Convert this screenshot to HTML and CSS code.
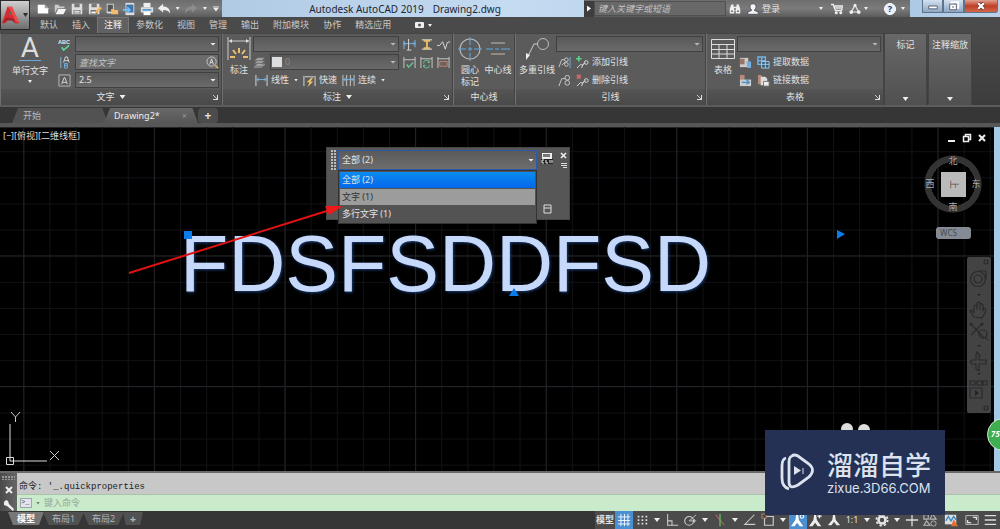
FILE: index.html
```html
<!DOCTYPE html>
<html lang="zh-CN">
<head>
<meta charset="utf-8">
<title>Autodesk AutoCAD 2019 Drawing2.dwg</title>
<link rel="stylesheet" href="styles.css">
</head>
<body>
<svg class="sprite" aria-hidden="true">
  <symbol id="new" viewBox="0 0 16 16"><path d="M2 3h8l4 4v6H2z" fill="#fff"/><path d="M10 3v4h4" fill="#999"/></symbol>
  <symbol id="open" viewBox="0 0 16 16"><path d="M2 13V3h4l2 2h5v2H5l-3 6z" fill="#ccc"/><path d="M3 14l3-6h9l-3 6z" fill="#f4f4f4"/></symbol>
  <symbol id="save" viewBox="0 0 16 16"><path d="M2 2h12v12H2z" fill="#ddd"/><path d="M5 2h6v4H5zM4 9h8v5H4z" fill="#777"/><path d="M5 10h6v1H5zM5 12h6v1H5z" fill="#fff"/></symbol>
  <symbol id="saveas" viewBox="0 0 16 16"><path d="M1 2h12v12H1z" fill="#ddd"/><path d="M4 2h6v4H4zM3 9h8v5H3z" fill="#777"/><path d="M4 11h5v2H4z" fill="#fff"/><path d="M8 13l1-3 5-5 2 2-5 5z" fill="#f2b25c"/></symbol>
  <symbol id="cloudopen" viewBox="0 0 16 16"><path d="M2 2h8v11H2z" fill="#ddd"/><path d="M3 3h6v8H3z" fill="#555"/><path d="M7 8h3l1 1h4v5H7z" fill="#f2bb70"/></symbol>
  <symbol id="mobile" viewBox="0 0 16 16"><path d="M4 1h10v14H4z" fill="#ddd"/><path d="M5 3h8v9H5z" fill="#3b76ad"/><path d="M1 9h8M6 6l3 3-3 3" stroke="#76bdf2" stroke-width="2" fill="none"/></symbol>
  <symbol id="print" viewBox="0 0 16 16"><path d="M4 1h8v5H4z" fill="#eee"/><path d="M1 6h14v6H1z" fill="#ddd"/><path d="M3 8h10v2H3z" fill="#579bd0"/><path d="M4 11h8v4H4z" fill="#fff"/></symbol>
  <symbol id="undo" viewBox="0 0 16 16"><path d="M1 7l6-5v3c5 0 8 3 8 8-2-3-4-4-8-4v3z" fill="#eee"/></symbol>
  <symbol id="redo" viewBox="0 0 16 16"><path d="M15 7L9 2v3C4 5 1 8 1 13c2-3 4-4 8-4v3z" fill="#8c8c8c"/></symbol>
  <symbol id="find" viewBox="0 0 16 16"><path d="M3 2h3v3h4V2h3l2 6v6H9v-4H7v4H1V8z" fill="#eee"/><path d="M3 10h2v2H3zM11 10h2v2h-2zM7 7h2v2H7z" fill="#444a5e"/></symbol>
  <symbol id="user" viewBox="0 0 16 16"><path d="M8 1c3 0 4 2 4 4 0 2-1 3-2 4v1l5 2v3H1v-3l5-2V9C5 8 4 7 4 5c0-2 1-4 4-4z" fill="#f4f4f4" stroke="#3d4254"/></symbol>
  <symbol id="cart" viewBox="0 0 16 16"><path d="M0 2h3l3 8h8l1-6H5" fill="none" stroke="#eee" stroke-width="2"/><path d="M5 5h9v3H6z" fill="#ccc"/><circle cx="7" cy="13" r="2" fill="#eee"/><circle cx="13" cy="13" r="2" fill="#eee"/></symbol>
  <symbol id="apps" viewBox="0 0 16 16"><path d="M8 3l5 9H3z" fill="none" stroke="#eee" stroke-width="1.5"/><circle cx="8" cy="3" r="2" fill="#eee"/><circle cx="3" cy="12" r="2.5" fill="#eee"/><circle cx="13" cy="12" r="2.5" fill="#eee"/></symbol>
  <symbol id="align" viewBox="0 0 14 14"><path d="M3 1v12" stroke="#7db7df"/><path d="M6 7l2-6h2l2 6M7 5h4" fill="none" stroke="#ddd"/><path d="M7 8h3v5H7zM7 10h3" fill="none" stroke="#75b5e4"/></symbol>
  <symbol id="height" viewBox="0 0 14 14"><path d="M1 1h12v12H1z" fill="none" stroke="#bbb"/><path d="M4 11l2.500-7h1L10 11M5 9h4" fill="none" stroke="#ddd"/></symbol>
  <symbol id="dim" viewBox="0 0 24 24"><path d="M1 0v23M23 0v23M2 4h20" stroke="#ccc" fill="none"/><path d="M2 4l3-2v4zM22 4l-3-2v4z" fill="#ddd"/><path d="M12 11v5M6 13l3 4M18 13l-3 4M3 20h5M21 20h-5" stroke="#edbd70" stroke-width="2"/></symbol>
  <symbol id="layers" viewBox="0 0 14 14"><path d="M5 2h8l-4 3H1zM5 5h8l-4 3H1zM5 8h8l-4 3H1z" fill="#a8a8a8" stroke="#646464" stroke-width=".6"/><path d="M1 12h8l4-3" fill="none" stroke="#aaa"/></symbol>
  <symbol id="linear" viewBox="0 0 14 14"><path d="M1 1v12M13 1v12" stroke="#ddd"/><path d="M2 6h10M4 4L2 6l2 2M10 4l2 2-2 2" fill="none" stroke="#75b9ec"/></symbol>
  <symbol id="quick" viewBox="0 0 14 14"><path d="M1 2v11M13 2v11M2 3h10" stroke="#ddd" fill="none"/><path d="M9 4L4 9h3l-2 5 6-6H8l3-4z" fill="#f3c365"/></symbol>
  <symbol id="continue" viewBox="0 0 14 14"><path d="M1 1v12M5 1v12M9 1v12M13 1v12" stroke="#ccc"/><path d="M1 6h12M4 4L2 6l2 2M10 4l2 2-2 2" fill="none" stroke="#75b9ec"/></symbol>
  <symbol id="break" viewBox="0 0 14 14"><path d="M1 3v9M13 2v8" stroke="#77b8ec"/><path d="M1 6h12M2 4L1 6l2 2M11 4l2 2-2 2" fill="none" stroke="#77b8ec"/><path d="M6 1v12M4 13h5" stroke="#ddd"/></symbol>
  <symbol id="space" viewBox="0 0 14 14"><path d="M2 2h11M2 12h11" stroke="#eee"/><path d="M4 3h7M4 11h7M7.500 3v8" stroke="#e9bd70" stroke-width="2"/></symbol>
  <symbol id="jog" viewBox="0 0 14 14"><path d="M0 8h3l3-4 3 8 2-7 3-1" fill="none" stroke="#ddd"/></symbol>
  <symbol id="check" viewBox="0 0 14 14"><path d="M1 1v12M13 1v12M1 4h12" fill="none" stroke="#ccc"/><path d="M4 9l2 3 5-5" fill="none" stroke="#61cb91" stroke-width="1.5"/></symbol>
  <symbol id="update" viewBox="0 0 14 14"><path d="M1 1v12M13 1v12M1 3h12" fill="none" stroke="#ccc"/><path d="M10 7a3 3 0 0 0-6 1M4 10a3 3 0 0 0 6 0M10 5v2H8M4 12v-2h2" fill="none" stroke="#61cb91"/></symbol>
  <symbol id="toler" viewBox="0 0 14 14"><path d="M1 1v12M13 1v12M1 3h12" fill="none" stroke="#ccc"/><path d="M3 6h8v5H3zM5 8.500h1M8 8.500h1" fill="none" stroke="#cc8975"/></symbol>
  <symbol id="centermark" viewBox="0 0 24 24"><circle cx="12" cy="12" r="10" fill="none" stroke="#b8b8b8" stroke-width="1.2"/><path d="M0 12h8M10 12h4M16 12h8M12 0v8M12 10v4M12 16v8" stroke="#63a9df"/></symbol>
  <symbol id="centerline" viewBox="0 0 24 24"><path d="M5 6h14M5 17h14" stroke="#c3b9ac"/><path d="M0 12h7M9 12h4M15 12h9" stroke="#63a9df"/></symbol>
  <symbol id="mleader" viewBox="0 0 24 24"><circle cx="18" cy="7" r="5.500" fill="none" stroke="#bbb"/><path d="M12.500 7H9L3 19" fill="none" stroke="#ccc"/><path d="M1 23v-7l4 2z" fill="#eee"/></symbol>
  <symbol id="lalign" viewBox="0 0 14 14"><path d="M1 12l3-8h3M4 10l3-3h1" fill="none" stroke="#ccc"/><circle cx="9" cy="4" r="2" fill="none" stroke="#ccc"/><circle cx="9" cy="9" r="2" fill="none" stroke="#ccc"/><path d="M13 1v12" stroke="#70afe0"/></symbol>
  <symbol id="lcollect" viewBox="0 0 14 14"><path d="M1 13l3-8h4" fill="none" stroke="#ccc"/><circle cx="10" cy="4" r="2.500" fill="none" stroke="#ccc"/><circle cx="10" cy="9.500" r="2.500" fill="none" stroke="#ccc"/></symbol>
  <symbol id="ladd" viewBox="0 0 14 14"><path d="M3 0v6M0 3h6" stroke="#5ed287" stroke-width="1.800"/><path d="M1 13l4-4 2 1 3-3M6 13l2-5" fill="none" stroke="#ddd"/><circle cx="11" cy="7" r="2" fill="none" stroke="#ddd"/></symbol>
  <symbol id="ldel" viewBox="0 0 14 14"><path d="M1 1l4 4M5 1L1 5" stroke="#df6767" stroke-width="1.800"/><path d="M1 13l4-4 2 1 3-3M6 13l2-5" fill="none" stroke="#ddd"/><circle cx="11" cy="7" r="2" fill="none" stroke="#ddd"/></symbol>
  <symbol id="table" viewBox="0 0 24 22"><path d="M.5 1.500h23v19H.5zM.5 6.500h23M.5 11.500h23M.5 16h23M8 6.500v14M16 6.500v14" fill="none" stroke="#ddd"/></symbol>
  <symbol id="dlink" viewBox="0 0 14 14"><path d="M1 2h9v10H1z" fill="#ccc"/><path d="M1 3h5v6H1z" fill="#987566"/><path d="M8 6h5v7H9z" fill="#75aede"/></symbol>
  <symbol id="dextract" viewBox="0 0 14 14"><path d="M1 1h8v8H1zM1 5h8M5 1v8" fill="none" stroke="#73b5e8" stroke-width="1.500"/><path d="M5 6h8v7H5zM5 9h8M9 6v7" fill="#345b78" stroke="#a7cce7"/></symbol>
  <symbol id="dupload" viewBox="0 0 14 14"><path d="M1 1h5v6H1z" fill="#b58a78"/><path d="M1 6h12v7H1z" fill="#ccc"/><path d="M3 9h7M8 6l3 3-3 2" fill="none" stroke="#4a91c7" stroke-width="1.500"/></symbol>
  <symbol id="ddown" viewBox="0 0 14 14"><path d="M1 1h4v10H1z" fill="#b58a78"/><path d="M4 3h5l2 2v7H4z" fill="#ddd"/><path d="M7 8h6v5H7z" fill="#eee" stroke="#777"/></symbol>
  <symbol id="grid" viewBox="0 0 16 16"><path d="M4.500 1v14M8.500 1v14M12.500 1v14M1 4.500h14M1 8.500h14M1 12.500h14" stroke="#fff"/></symbol>
  <symbol id="snap" viewBox="0 0 16 16"><path d="M3 4h11M3 8h11M3 12h11" stroke="#ddd" stroke-width="2" stroke-dasharray="2 2.500"/></symbol>
  <symbol id="ortho" viewBox="0 0 16 16"><path d="M3 1v13h12M3 9h5v5" fill="none" stroke="#ccc" stroke-width="1.200"/></symbol>
  <symbol id="polar" viewBox="0 0 16 16"><circle cx="7" cy="9" r="5" fill="none" stroke="#ccc" stroke-width="1.300"/><path d="M7 9h8M7 9l8-7M13 7v4" stroke="#ccc" fill="none"/></symbol>
  <symbol id="iso" viewBox="0 0 16 16"><path d="M3 2l10 12" stroke="#b66" stroke-width="1.200"/><path d="M8 1v14" stroke="#6b6" stroke-width="1.500"/></symbol>
  <symbol id="angle" viewBox="0 0 16 16"><path d="M13 2L2 13h12" fill="none" stroke="#ccc" stroke-width="1.200"/></symbol>
  <symbol id="osnap" viewBox="0 0 16 16"><path d="M4 4h10v10H4z" fill="none" stroke="#ccc" stroke-width="1.300"/><path d="M1 1h5v5H1z" fill="#4c4c4c" stroke="#b78d70"/></symbol>
  <symbol id="scale" viewBox="0 0 16 16"><path d="M7 1h2l1 7 5 6h-4l-3-4-3 4H1l5-6z" fill="#eee"/></symbol>
  <symbol id="scale2" viewBox="0 0 16 16"><path d="M6 1h2l1 7 5 7h-4l-3-4-3 4H0l5-7z" fill="#eee"/><path d="M12 1v5M9.500 3.500h5" stroke="#eee" stroke-width="1.500"/></symbol>
  <symbol id="scale3" viewBox="0 0 16 16"><path d="M6 1h2l1 7 5 7h-4l-3-4-3 4H0l5-7z" fill="#fff"/><circle cx="12.500" cy="4" r="2" fill="none" stroke="#fff" stroke-width="1.200"/></symbol>
  <symbol id="gear" viewBox="0 0 16 16"><circle cx="8" cy="8" r="4" fill="none" stroke="#e5e5e5" stroke-width="3"/><circle cx="8" cy="8" r="6.500" fill="none" stroke="#e5e5e5" stroke-width="2" stroke-dasharray="2.600 2.500"/></symbol>
  <symbol id="plus" viewBox="0 0 16 16"><path d="M8 2v13M1 8h14" stroke="#ddd" stroke-width="1.500"/></symbol>
  <symbol id="shapes" viewBox="0 0 16 16"><path d="M1 2h5v5H1zM11 1l4 6H8zM4 9l4 5H1z" fill="none" stroke="#bbb" stroke-width="1.200"/><circle cx="12" cy="12" r="3" fill="none" stroke="#bbb"/></symbol>
  <symbol id="perf" viewBox="0 0 16 16"><path d="M1 2h13v11H1z" fill="#ddd"/><path d="M2 9l3-5 3 5 3-5 3 4" fill="none" stroke="#368bc8" stroke-width="1.500"/><path d="M11 7l5 8H8z" fill="#e66d32"/></symbol>
  <symbol id="full" viewBox="0 0 16 16"><path d="M1 3h14v10H1z" fill="none" stroke="#ccc"/><path d="M9 5h4v3M3 8v3h4" fill="none" stroke="#ddd" stroke-width="1.500"/></symbol>
  <symbol id="menu" viewBox="0 0 16 16"><path d="M2 3h13M2 8h13M2 13h13" stroke="#ddd" stroke-width="1.600"/></symbol>
</svg>

<header class="top">
  <button class="app" aria-label="应用程序菜单">
    <svg viewBox="0 0 22 20"><path d="M0 19L6 1h5l8 18h-5l-1-5H7l-3 5z" fill="#d62a2f"/><path d="M8 10l1-5 3 5z" fill="#686868"/><path d="M0 19l5-6 8 1 1 5-3-3-6 0z" fill="#9e1f25"/><path d="M6 1h5l8 18-4-2-6-13z" fill="#ef4b4b"/></svg>
    <span class="caret dark"></span>
  </button>
  <div class="bars">
    <div class="titlebar">
      <div class="qat">
        <button aria-label="新建"><svg><use href="#new"/></svg></button>
        <button aria-label="打开"><svg><use href="#open"/></svg></button>
        <button aria-label="保存"><svg><use href="#save"/></svg></button>
        <button aria-label="另存为"><svg><use href="#saveas"/></svg></button>
        <button aria-label="从移动设备打开"><svg><use href="#cloudopen"/></svg></button>
        <button aria-label="保存到移动设备"><svg><use href="#mobile"/></svg></button>
        <button aria-label="打印"><svg><use href="#print"/></svg></button>
        <button aria-label="放弃"><svg><use href="#undo"/></svg></button>
        <span class="caret small"></span>
        <button aria-label="重做"><svg><use href="#redo"/></svg></button>
        <span class="caret small"></span>
        <span class="caret bar"></span>
      </div>
      <div class="title"><span>Autodesk AutoCAD 2019</span><span>Drawing2.dwg</span></div>
      <div class="info">
        <button class="play" aria-label="折叠搜索"><span></span></button>
        <input type="text" aria-label="搜索" placeholder="键入关键字或短语">
        <button aria-label="查找"><svg><use href="#find"/></svg></button>
        <button class="login"><svg><use href="#user"/></svg>登录</button>
        <span class="caret small"></span>
        <button aria-label="购物车"><svg><use href="#cart"/></svg></button>
        <button aria-label="应用"><svg><use href="#apps"/></svg></button>
        <span class="caret small"></span>
        <button class="help" aria-label="帮助"><span>?</span></button>
        <span class="caret small"></span>
      </div>
      <div class="win">
        <button aria-label="最小化"><svg viewBox="0 0 20 12"><path d="M6 6h9v3H6z" fill="#fff" stroke="#555d70"/></svg></button>
        <button aria-label="还原"><svg viewBox="0 0 20 12"><path d="M8 2h7v6H8z" fill="none" stroke="#fff" stroke-width="2"/><path d="M6 4h7v6H6z" fill="#fff" stroke="#555d70"/><path d="M8.500 6.500h2v1h-2z" fill="#555d70"/></svg></button>
        <button class="close" aria-label="关闭"><svg viewBox="0 0 34 12"><path d="M14 3l6 6M20 3l-6 6" stroke="#6c3030" stroke-width="4"/><path d="M14 3l6 6M20 3l-6 6" stroke="#fff" stroke-width="2.400"/></svg></button>
      </div>
    </div>
    <nav class="menu">
      <button>默认</button><button>插入</button><button class="on">注释</button><button>参数化</button><button>视图</button><button>管理</button><button>输出</button><button>附加模块</button><button>协作</button><button>精选应用</button>
      <button class="video" aria-label="显示选项"><svg viewBox="0 0 18 8"><rect x="1" y="1" width="9" height="6" rx="1" fill="#eee"/><circle cx="5.500" cy="4" r="1.500" fill="#555"/><path d="M14 3h4l-2 3z" fill="#eee"/></svg></button>
    </nav>
  </div>
</header>

<main class="ribbon">
  <section class="panel p-text">
    <div class="body">
      <button class="big"><span class="bigA">A</span>单行文字<span class="caret small"></span></button>
      <div class="rows grow">
        <div class="row"><svg viewBox="0 0 14 14"><text x="0" y="6" font-family="Liberation Sans" font-size="6" font-weight="bold" fill="#e4e4e4">ABC</text><path d="M4 10l2 3 6-5" fill="none" stroke="#66d398" stroke-width="1.800"/></svg><span class="combo"><select aria-label="文字样式"><option></option></select></span></div>
        <div class="row"><svg><use href="#align"/></svg><span class="search"><input type="text" aria-label="查找文字" placeholder="查找文字"><svg viewBox="0 0 14 14"><circle cx="6" cy="6" r="5" fill="none" stroke="#ccc"/><path d="M4 9l2-6 2 6M5 7h2" fill="none" stroke="#ddd"/><path d="M10 10l3 3" stroke="#dba66b" stroke-width="2"/></svg></span></div>
        <div class="row"><svg><use href="#height"/></svg><span class="combo"><select aria-label="文字高度"><option>2.5</option></select></span></div>
      </div>
    </div>
    <h2>文字<span class="caret"></span><i class="launch"></i></h2>
  </section>
  <section class="panel p-dim">
    <div class="body">
      <button class="big slim"><svg><use href="#dim"/></svg>标注</button>
      <div class="rows grow">
        <div class="row"><span class="combo dim"><select aria-label="标注样式"><option></option></select></span><svg><use href="#break"/></svg><svg><use href="#space"/></svg><svg><use href="#jog"/></svg></div>
        <div class="row"><svg><use href="#layers"/></svg><span class="combo dim layer"><select aria-label="标注图层"><option>0</option></select></span><svg><use href="#check"/></svg><svg><use href="#update"/></svg><svg><use href="#toler"/></svg></div>
        <div class="row tools"><button><svg><use href="#linear"/></svg>线性</button><span class="caret small"></span><button><svg><use href="#quick"/></svg>快速</button><button><svg><use href="#continue"/></svg>连续</button><span class="caret small"></span></div>
      </div>
    </div>
    <h2>标注<span class="caret"></span><i class="launch"></i></h2>
  </section>
  <section class="panel p-center">
    <div class="body">
      <button class="big slim"><svg><use href="#centermark"/></svg>圆心<br>标记</button>
      <button class="big slim"><svg><use href="#centerline"/></svg>中心线</button>
    </div>
    <h2>中心线</h2>
  </section>
  <section class="panel p-leader">
    <div class="body">
      <button class="big mid"><svg><use href="#mleader"/></svg>多重引线</button>
      <div class="rows grow">
        <div class="row"><span class="combo dim"><select aria-label="引线样式"><option></option></select></span></div>
        <div class="row tools"><svg><use href="#lalign"/></svg><button><svg><use href="#ladd"/></svg>添加引线</button></div>
        <div class="row tools"><svg><use href="#lcollect"/></svg><button><svg><use href="#ldel"/></svg>删除引线</button></div>
      </div>
    </div>
    <h2>引线<i class="launch"></i></h2>
  </section>
  <section class="panel p-table">
    <div class="body">
      <button class="big slim"><svg><use href="#table"/></svg>表格</button>
      <div class="rows grow">
        <div class="row"><span class="combo dim"><select aria-label="表格样式"><option></option></select></span></div>
        <div class="row tools"><svg><use href="#dlink"/></svg><button><svg><use href="#dextract"/></svg>提取数据</button></div>
        <div class="row tools"><svg><use href="#dupload"/></svg><button><svg><use href="#ddown"/></svg>链接数据</button></div>
      </div>
    </div>
    <h2>表格<i class="launch"></i></h2>
  </section>
  <button class="folded">标记<span class="caret"></span></button>
  <button class="folded">注释缩放<span class="caret"></span></button>
</main>

<nav class="docs">
  <button class="doc">开始</button>
  <button class="doc on">Drawing2*<span>×</span></button>
  <button class="add" aria-label="新图形">+</button>
</nav>

<div class="canvas">
  <svg class="layer-svg" aria-hidden="true">
    <defs>
      <pattern id="minor" width="26.120" height="26.120" x="23.300" y="-1.900" patternUnits="userSpaceOnUse"><path d="M.5 0v27M0 .5h27" stroke="#111216"/></pattern>
      <pattern id="major" width="130.600" height="130.600" x="23.300" y="-2.200" patternUnits="userSpaceOnUse"><path d="M.5 0v131M0 .5h131" stroke="#222327"/></pattern>
    </defs>
    <rect width="100%" height="100%" fill="url(#minor)"/><rect width="100%" height="100%" fill="url(#major)"/>
    <path d="M10 297v37h37M6.500 330.500h7v7h-7z" fill="none" stroke="#ddd"/>
    <path d="M11 285l4.500 5 4.500-5M15.500 290v5M50 324l9 9M59 324l-9 9" fill="none" stroke="#ccc"/>
  </svg>
  <div class="viewlabel">[−][俯视][二维线框]</div>
  <div class="mtext">FDSFSDDFSD</div>

  <div class="docwin">
    <button aria-label="最小化"><svg viewBox="0 0 10 10"><path d="M1 8h7" stroke="#eee" stroke-width="2"/></svg></button>
    <button aria-label="还原"><svg viewBox="0 0 10 10"><path d="M3.500 3V1.500h5v5H7M1.500 3.500h5v5h-5z" fill="none" stroke="#eee" stroke-width="1.500"/></svg></button>
    <button aria-label="关闭"><svg viewBox="0 0 10 10"><path d="M2 2l6 6M8 2L2 8" stroke="#eee" stroke-width="2"/></svg></button>
  </div>
  <div class="cube">
    <span class="n">北</span><span class="w">西</span><span class="face">上</span><span class="e">东</span><span class="s">南</span>
  </div>
  <button class="wcs">WCS</button>
  <div class="navbar" aria-hidden="true">
    <svg viewBox="0 0 24 156"><g fill="none" stroke="#292a2d" stroke-width="1.200"><circle cx="19" cy="5" r="2"/><circle cx="11" cy="22" r="7.500"/><circle cx="11" cy="22" r="4"/><path d="M11 14h8v8M7 60l-4-6q2-2 4 2v-7q2-2 3 0v4-7q2-2 3 0v7-6q2-1 3 1v6l1-3q3 0 1 5l-3 5zM4 67l13 14M15 67L4 78"/><circle cx="4" cy="67" r="1"/><circle cx="15" cy="67" r="1"/><circle cx="16" cy="77" r="4"/><path d="M18 80l3 3M10 95l3 4h-1v4h7v4h-7v7l-3-2v-5H5l-2-2 2-2h4v-5zM3 124h5v4H3zM10 124h5v4h-5zM16 124h4v4h-4zM3 131h12v10H3z"/><circle cx="19" cy="151" r="2"/></g><path d="M10 37h4l-2 2zM10 88h4l-2 2zM10 116h4l-2 2zM8 133v6l4-3z" fill="#222326"/></svg>
  </div>

  <section class="quick" aria-label="快捷特性">
    <i class="grip"></i>
    <div class="quickmain">
      <span class="combo"><select aria-label="对象类型"><option>全部 (2)</option><option>文字 (1)</option><option>多行文字 (1)</option></select></span>
      <ul class="list" role="listbox">
        <li role="option" aria-selected="true">全部 (2)</li>
        <li role="option" class="hover">文字 (1)</li>
        <li role="option">多行文字 (1)</li>
      </ul>
    </div>
    <div class="side">
      <button aria-label="自定义"><svg viewBox="0 0 12 12"><path d="M1 1h10v6H1z" fill="#eee"/><path d="M2 2h7v3H2z" fill="#777"/><path d="M0 7h12v5H0z" fill="#222"/><path d="M3 8H1v3h2M5 8v3h2M9 8v3M11 8v3" fill="none" stroke="#eee"/></svg></button>
      <button aria-label="计算器"><svg viewBox="0 0 12 12"><path d="M3 2h7v8H3zM3 5h7" fill="none" stroke="#ddd"/></svg></button>
    </div>
    <div class="side">
      <button aria-label="关闭"><svg viewBox="0 0 12 12"><path d="M4 3l5 5M9 3L4 8" stroke="#eee" stroke-width="1.600"/></svg></button>
      <button class="opt" aria-label="选项"><svg viewBox="0 0 12 12"><path d="M4 1.500h6M4 3.500h6M6 5.500h4" stroke="#ddd"/></svg></button>
    </div>
  </section>

  <svg class="layer-svg over" aria-hidden="true">
    <path d="M184 104h8v8h-8zM837 103l8 4-8 5zM514 161l5 8h-10z" fill="#0a7cec"/>
    <path d="M129 146L330 83" stroke="#e01212" stroke-width="2"/><path d="M343 79l-14 9-4-9z" fill="#f01818"/>
    <circle cx="847" cy="302" r="6" fill="#ddd"/><circle cx="864" cy="303" r="6" fill="#ddd"/>
  </svg>
</div>

<section class="command">
  <div class="handle">
    <i></i>
    <button aria-label="关闭"><svg viewBox="0 0 12 12"><path d="M3 3l6 6M9 3L3 9" stroke="#eee" stroke-width="2"/></svg></button>
    <button aria-label="自定义"><svg viewBox="0 0 12 12"><path d="M1 3l2-2 2 1 1 3 5 5-1 2-6-5-3-1z" fill="#eee"/></svg></button>
  </div>
  <div class="cmdmain">
    <div class="history">命令: '_.quickproperties</div>
    <label class="prompt"><span class="chip">&gt;_</span><span class="caret small grey"></span><input type="text" aria-label="命令" placeholder="键入命令"></label>
  </div>
</section>

<footer class="status">
  <nav class="layouts"><button class="on">模型</button><button>布局1</button><button>布局2</button><button class="more">+</button></nav>
  <div class="tools2">
    <button class="model">模型</button>
    <button class="blue" aria-label="栅格"><svg><use href="#grid"/></svg></button>
    <button aria-label="捕捉"><svg><use href="#snap"/></svg></button><span class="caret"></span>
    <button aria-label="正交"><svg><use href="#ortho"/></svg></button>
    <button aria-label="极轴"><svg><use href="#polar"/></svg></button><span class="caret"></span>
    <button aria-label="等轴测"><svg><use href="#iso"/></svg></button><span class="caret"></span>
    <button aria-label="对象捕捉追踪"><svg><use href="#angle"/></svg></button>
    <button aria-label="对象捕捉"><svg><use href="#osnap"/></svg></button><span class="caret"></span>
    <button class="blue" aria-label="注释可见性"><svg><use href="#scale3"/></svg></button>
    <button aria-label="自动缩放"><svg><use href="#scale2"/></svg></button>
    <button aria-label="注释比例"><svg><use href="#scale"/></svg></button>
    <button>1:1</button><span class="caret"></span>
    <button aria-label="工作空间"><svg><use href="#gear"/></svg></button><span class="caret"></span>
    <button aria-label="注释监视器"><svg><use href="#plus"/></svg></button>
    <button aria-label="隔离对象"><svg><use href="#shapes"/></svg></button>
    <button class="gap" aria-label="图形性能"><svg><use href="#perf"/></svg></button>
    <button class="gap" aria-label="全屏"><svg><use href="#full"/></svg></button>
    <button aria-label="自定义"><svg><use href="#menu"/></svg></button>
  </div>
</footer>

<div class="badge">75</div>
<aside class="brand">
  <svg viewBox="0 0 36 38"><path d="M13 3q2-2 6 0l11 8q7 6 0 13l-11 8q-9 5-9-3V9q0-5 3-6z" fill="none" stroke="#dce2ee" stroke-width="2.800"/><path d="M7 5Q3 6 3 13v12q0 9 7 11" fill="none" stroke="#dce2ee" stroke-width="2.800"/><path d="M15 13v9l7-4.500z" fill="#dce2ee"/><path d="M24 15v6" stroke="#dce2ee"/></svg>
  <p><strong>溜溜自学</strong><span>zixue.3D66.COM</span></p>
</aside>
</body>
</html>
```

FILE: styles.css
```css
* { box-sizing: border-box; }

body {
  margin: 0;
  min-height: 100vh;
  display: flex;
  flex-direction: column;
  overflow: hidden;
  background: #383838;
  color: #e2e2e2;
  font: 9px/12px "Noto Sans", "Noto Sans CJK SC", sans-serif;
}

button, input, select {
  margin: 0;
  padding: 0;
  border: 0;
  border-radius: 0;
  background: none;
  color: inherit;
  font: inherit;
}
select { appearance: none; }
button { display: flex; align-items: center; justify-content: center; white-space: nowrap; }
svg { display: block; flex: none; }
.sprite { position: absolute; width: 0; height: 0; }

.caret {
  flex: none;
  width: 6px;
  height: 4px;
  background: #eee;
  clip-path: polygon(0 0, 100% 0, 50% 100%);
}
.caret.small { width: 4px; height: 3px; }
.caret.dark { background: #2b2b2b; width: 5px; }
.caret.grey { background: #777; }
.caret.bar { height: 6px; clip-path: polygon(0 0, 100% 0, 100% 17%, 0 17%, 0 34%, 100% 34%, 50% 100%, 0 34%); }

/* title bar and menu */
.top { display: flex; background: #4a4a4a; }
.app {
  width: 30px;
  height: 30px;
  gap: 1px;
  border: 1px solid #2a2a2a;
  background: linear-gradient(#d0d0d0, #6e6e6e);
}
.app svg { width: 20px; height: 20px; }
.bars { flex: 1; min-width: 0; }
.titlebar { display: flex; height: 17px; background: linear-gradient(90deg, #a5bfdb, #c4dbf1 50%, #aac8e6 90%, #bad1e8); }
.qat, .info { background: linear-gradient(#6d6d6d, #7b7b7b 50%, #5c5c5c); display: flex; align-items: center; }
.qat { width: 192px; padding-left: 4px; }
.qat button { width: 18px; height: 16px; }
.qat svg { width: 14px; height: 14px; }
.qat .caret { margin: 0 3px; }
.title { flex: 1; display: flex; justify-content: center; gap: 9px; align-items: center; padding-left: 4px; color: #1e2630; font-size: 10px; }
.info { width: 326px; }
.info > button { width: 18px; height: 16px; }
.info svg { width: 12px; height: 12px; }
.info .play { width: 10px; background: #3d3d3d; }
.play span { width: 4px; height: 6px; background: #fff; clip-path: polygon(0 0, 100% 50%, 0 100%); }
.info input { width: 132px; height: 15px; padding: 0 3px; background: #686868; border: 1px solid #505050; font-style: italic; }
input::placeholder { color: #c2c2c2; opacity: 1; }
.info .login { flex: 1; justify-content: flex-start; gap: 3px; padding-left: 3px; }
.info .caret { margin-right: 5px; }
.info .help { margin-left: 6px; width: 22px; }
.help span { width: 12px; height: 12px; border: 1px solid #fff; border-radius: 50%; background: #e9eff8; color: #183a7c; font-weight: 700; line-height: 10px; }
.win { display: flex; width: 90px; height: 13px; padding: 0 2px 0 12px; }
.win button { width: 21px; background: linear-gradient(#d3e1f0, #8da7c4); border: 1px solid #5f728a; border-top: 0; }
.win svg { height: 12px; width: 19px; }
.win .close { width: 34px; background: linear-gradient(#e0a190, #bf3f25 50%, #d4674c); border-radius: 0 0 3px 0; }
.win .close svg { width: 32px; }
.menu { display: flex; padding-left: 3px; height: 16px; }
.menu button { padding: 0 7px; height: 16px; color: #c9c9c9; }
.menu .on { background: #616161; box-shadow: inset 1px 1px #777, inset -1px 0 #777; color: #f2f2f2; }
.menu .video { margin-left: 9px; }
.video svg { width: 18px; height: 8px; }

/* ribbon */
.ribbon { display: flex; height: 74px; background: linear-gradient(#4a4a4a, #3c3c3c); border-bottom: 2px solid #5c5c5c; }
.panel { display: flex; flex-direction: column; border: 1px solid #444; border-left-color: #717171; border-bottom: 0; background: #5b5b5b; }
.panel .body { flex: 1; display: flex; padding: 2px 2px 0; min-height: 0; }
.panel h2 { margin: 0; height: 16px; display: flex; align-items: center; justify-content: center; gap: 5px; background: linear-gradient(#555, #494949); font-size: 9px; font-weight: 400; position: relative; }
.launch { position: absolute; right: 3px; top: 6px; width: 5px; height: 5px; border: solid #ddd; border-width: 0 1px 1px 0; background: linear-gradient(45deg, transparent 40%, #ccc 40% 60%, transparent 60%); transform: scaleY(-1) rotate(-90deg); }
.p-text { width: 222px; }
.p-dim { width: 231px; }
.p-center { width: 62px; }
.p-leader { width: 191px; }
.p-table { width: 178px; }
.big { flex-direction: column; justify-content: flex-start; width: 54px; line-height: 12px; }
.big svg { width: 24px; height: 24px; margin: 1px 0 3px; }
.big.slim { width: 28px; }
.big.mid { width: 38px; }
.big .caret { margin-top: 3px; }
.bigA { font: 28px/22px "Roboto", sans-serif; height: 25px; border-bottom: 1px solid #6aa8d8; margin-bottom: 4px; padding: 1px 2px 0; color: #ddd; }
.rows { display: flex; flex-direction: column; gap: 2px; min-width: 0; }
.grow { flex: 1; }
.row { display: flex; align-items: center; gap: 4px; height: 16px; }
.row svg { width: 13px; height: 13px; }
.combo, .search { flex: 1; min-width: 0; display: grid; align-items: center; }
.combo select, .search input { grid-area: 1 / 1; width: 100%; height: 16px; padding: 0 3px; border: 1px solid #404040; background: linear-gradient(#595959, #6a6a6a); }
.combo::after { content: ""; grid-area: 1 / 1; justify-self: end; margin-right: 3px; width: 6px; height: 3px; background: #eee; clip-path: polygon(0 0, 100% 0, 50% 100%); pointer-events: none; }
.combo.dim::after { background: #bbb; }
.search input { font-style: italic; background: #6b6b6b; }
.search svg { grid-area: 1 / 1; justify-self: end; }
.layer select { padding-left: 14px; color: #8a8a8a; }
.layer::before { content: ""; grid-area: 1 / 1; z-index: 1; margin-left: 2px; width: 10px; height: 10px; background: #ddd; }
.p-text .rows { padding-left: 1px; }
.tools button { gap: 3px; }
.tools { padding-left: 2px; gap: 5px; }
.folded { flex-direction: column; justify-content: space-between; width: 43px; margin-right: 1px; padding: 5px 0 4px; border: 1px solid #444; border-bottom: 0; background: linear-gradient(#686868, #505050); }
.folded + .folded { margin-right: 0; width: 44px; }

/* drawing tabs */
.docs { display: flex; height: 20px; padding: 1px 0 0 12px; border-bottom: 4px solid #575757; background: #363636; }
.doc { justify-content: flex-start; width: 96px; padding-left: 11px; background: #525252; color: #b9b9b9; clip-path: polygon(0 100%, 6px 0, 94% 0, 100% 100%); }
.doc.on { width: 94px; margin-left: -4px; padding: 0 11px 0 10px; justify-content: space-between; background: linear-gradient(#686868, #575757); color: #eee; }
.doc span { color: #999; }
.add { width: 20px; background: #4c4c4c; border-radius: 4px; font-size: 12px; font-weight: 700; }

/* model space */
.canvas { position: relative; flex: 1; overflow: hidden; background: #000; border-right: 6px solid #a3cbe6; box-shadow: inset 0 1px #262626; }
.layer-svg { position: absolute; left: 0; top: 0; width: 100%; height: 100%; }
.viewlabel { position: absolute; left: 3px; top: 3px; color: #ddd; }
.mtext { position: absolute; left: 180px; top: 92px; font: 79px/90px "Liberation Sans", sans-serif; color: #c7d9fa; text-shadow: 1px 1px 3px #1c3f78; }
.docwin { position: absolute; right: 7px; top: 6px; display: flex; gap: 5px; }
.docwin svg { width: 10px; height: 10px; }
.cube { position: absolute; right: 12px; top: 28px; width: 58px; height: 58px; display: grid; grid-template: "a n b" 12px "w f e" 1fr "c s d" 12px / 12px 1fr 12px; place-items: center; color: #aaa; background: radial-gradient(circle, transparent 22px, #333 22px 28px, transparent 29px); }
.cube .n { grid-area: n; }
.cube .w { grid-area: w; }
.cube .face { grid-area: f; }
.cube .e { grid-area: e; }
.cube .s { grid-area: s; }
.face { width: 25px; height: 25px; background: #bababa; color: #555; text-align: center; line-height: 24px; transform: rotate(90deg); }
.wcs { position: absolute; right: 23px; top: 100px; width: 35px; height: 12px; border-radius: 3px; background: #858b94; color: #444b55; padding-right: 10px; font-size: 8px; }
.navbar { position: absolute; right: 3px; top: 130px; width: 24px; border-radius: 2px; background: #434343; }

.quick { position: absolute; left: 326px; top: 20px; width: 244px; height: 73px; display: flex; padding: 2px 0 0 4px; background: #565656; border: 1px solid #484848; }
.grip { width: 6px; height: 20px; background: radial-gradient(circle at 1px 1px, #bbb 1px, transparent 1px) 0 0 / 3px 3px; }
.quickmain { width: 200px; margin-left: 1px; }
.quickmain select { height: 20px; border-color: #2c59a9; background: linear-gradient(#5a5a5a, #6d6d6d); }
.list { list-style: none; margin: 0; padding: 1px; background: #535353; border: 1px solid #333; position: relative; }
.list li { padding: 0 2px; height: 16px; line-height: 16px; }
.list li + li { margin-top: 1px; }
.list li[aria-selected] { background: linear-gradient(#0a8cf0, #0467ec); }
.list .hover { background: #9c9c9c; color: #333; }
.side { display: flex; flex-direction: column; justify-content: space-between; padding: 2px 2px 4px 4px; }
.side svg { width: 12px; height: 12px; }
.side + .side { justify-content: flex-start; padding: 0 0 0 2px; }
.over { pointer-events: none; }
.badge { position: fixed; right: -20px; bottom: 78px; width: 33px; height: 33px; padding-left: 3px; border-radius: 50%; border: 1px solid #d5efd6; background: #3eae51; color: #fff; font-size: 8px; font-weight: 700; font-style: italic; line-height: 30px; }

/* command line */
.command { display: flex; height: 40px; border-top: 2px solid #686868; }
.handle { width: 17px; display: flex; flex-direction: column; align-items: center; justify-content: space-between; background: linear-gradient(90deg, #4a4a4a, #666); padding: 3px 0 0; }
.handle i { width: 13px; height: 4px; background: radial-gradient(circle at 1px 1px, #999 1px, transparent 1px) 0 0 / 3px 3px; }
.handle svg { width: 12px; height: 12px; }
.cmdmain { flex: 1; display: flex; flex-direction: column; }
.history { flex: 1; display: flex; align-items: flex-end; padding: 0 2px 1px; background: #c8c8c8; color: #222; font-family: "Liberation Mono", "Noto Sans CJK SC", monospace; white-space: pre; }
.prompt { display: flex; align-items: center; gap: 4px; height: 17px; padding-left: 3px; background: #c9ebcb; border-top: 1px solid #a9c2aa; }
.prompt input { flex: 1; color: #444; }
.prompt input::placeholder { color: #93a894; }
.chip { width: 12px; height: 10px; background: #e3e3ee; border: 1px solid #9ea5b0; color: #444; font: 7px/7px "Liberation Mono", monospace; }

/* status bar */
.status { display: flex; height: 18px; justify-content: space-between; background: #363636; }
.layouts { display: flex; height: 13px; margin-top: 1px; padding-left: 8px; }
.layouts button { width: 41px; margin-right: -1px; background: #515151; color: #b5b5b5; clip-path: polygon(0 0, 100% 0, 86% 100%, 14% 100%); }
.layouts .on { width: 36px; background: #777; color: #fff; font-weight: 700; }
.layouts .more { width: 20px; font-size: 11px; font-weight: 700; }
.tools2 { display: flex; align-items: center; padding-right: 1px; background: #4b4b4b; }
.tools2 button { width: 18px; height: 18px; }
.tools2 svg { width: 14px; height: 14px; }
.tools2 .model { width: 20px; font-weight: 700; }
.tools2 .caret { margin: 0 3px; }
.tools2 .blue { background: #4c8fd0; }
.tools2 .gap { margin-left: 3px; }

.brand { position: fixed; right: 55px; bottom: 14px; width: 180px; height: 85px; display: flex; align-items: center; gap: 12px; padding: 0 0 2px 14px; background: #243155; color: #dce2ee; }
.brand svg { width: 36px; height: 38px; }
.brand p { margin: 0; display: flex; flex-direction: column; }
.brand strong { font: 500 26px/32px "Noto Sans CJK SC", sans-serif; }
.brand span { font: 13px/16px "Inter", sans-serif; }
```
